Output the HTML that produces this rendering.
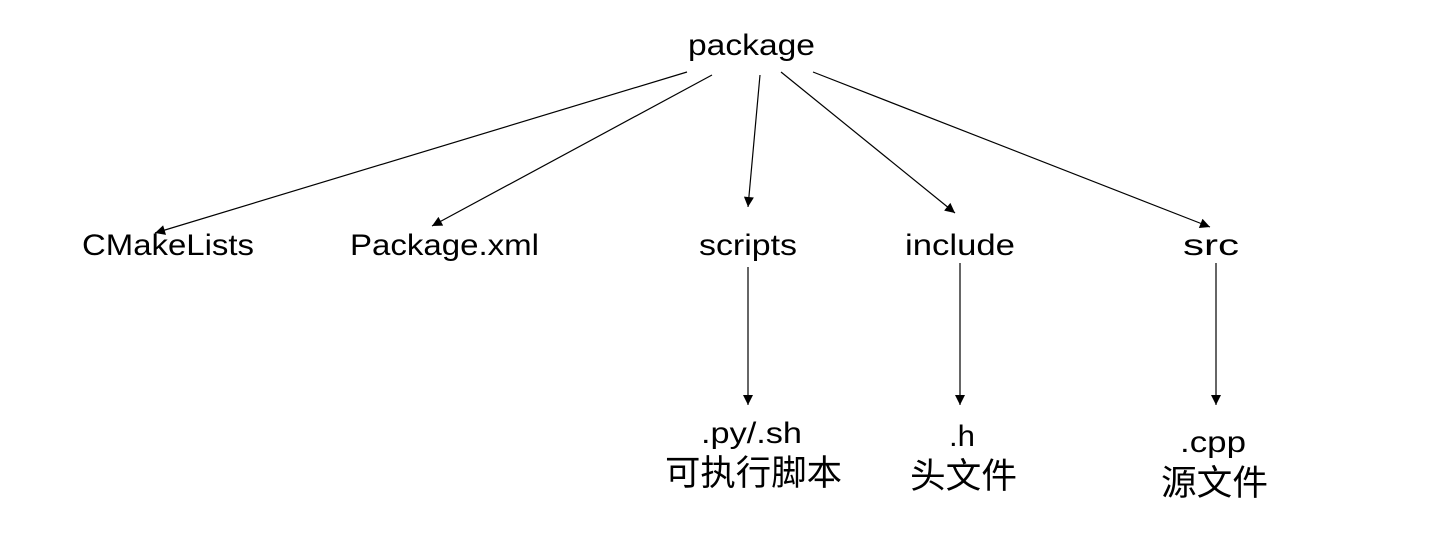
<!DOCTYPE html>
<html><head><meta charset="utf-8"><style>
html,body{margin:0;padding:0;background:#fff;}
svg{display:block;}
text{font-family:"Liberation Sans","Noto Sans CJK SC",sans-serif;fill:#000;}
</style></head><body>
<svg width="1453" height="543" viewBox="0 0 1453 543" xmlns="http://www.w3.org/2000/svg">
<defs><marker id="a" viewBox="0 0 10 10" refX="10" refY="5" markerWidth="11" markerHeight="10" markerUnits="userSpaceOnUse" orient="auto"><path d="M0,0 L10,5 L0,10 z" fill="#000"/></marker></defs>
<g stroke="#000" stroke-width="1.2" fill="none" marker-end="url(#a)">
<line x1="687" y1="72" x2="155" y2="233"/>
<line x1="712" y1="75" x2="432" y2="226"/>
<line x1="760" y1="75" x2="748" y2="207"/>
<line x1="781" y1="72" x2="955" y2="213"/>
<line x1="813" y1="72" x2="1210" y2="227"/>
<line x1="748" y1="267" x2="748" y2="405"/>
<line x1="960" y1="263" x2="960" y2="405"/>
<line x1="1216" y1="263" x2="1216" y2="405"/>
</g>
<g font-size="30">
<text x="688" y="55" textLength="127" lengthAdjust="spacingAndGlyphs">package</text>
<text x="82" y="255" textLength="172" lengthAdjust="spacingAndGlyphs">CMakeLists</text>
<text x="350" y="255" textLength="189" lengthAdjust="spacingAndGlyphs">Package.xml</text>
<text x="699" y="255" textLength="98" lengthAdjust="spacingAndGlyphs">scripts</text>
<text x="905" y="255" textLength="110" lengthAdjust="spacingAndGlyphs">include</text>
<text x="1183" y="255" textLength="56" lengthAdjust="spacingAndGlyphs">src</text>
<text x="701" y="443" textLength="101" lengthAdjust="spacingAndGlyphs">.py/.sh</text>
<text x="949" y="446" textLength="26" lengthAdjust="spacingAndGlyphs">.h</text>
<text x="1180" y="452" textLength="66" lengthAdjust="spacingAndGlyphs">.cpp</text>
</g>
<g font-size="35">
<text x="665" y="485" textLength="177" lengthAdjust="spacingAndGlyphs">可执行脚本</text>
<text x="910" y="488" textLength="107" lengthAdjust="spacingAndGlyphs">头文件</text>
<text x="1161" y="495" textLength="107" lengthAdjust="spacingAndGlyphs">源文件</text>
</g>
</svg>
</body></html>
